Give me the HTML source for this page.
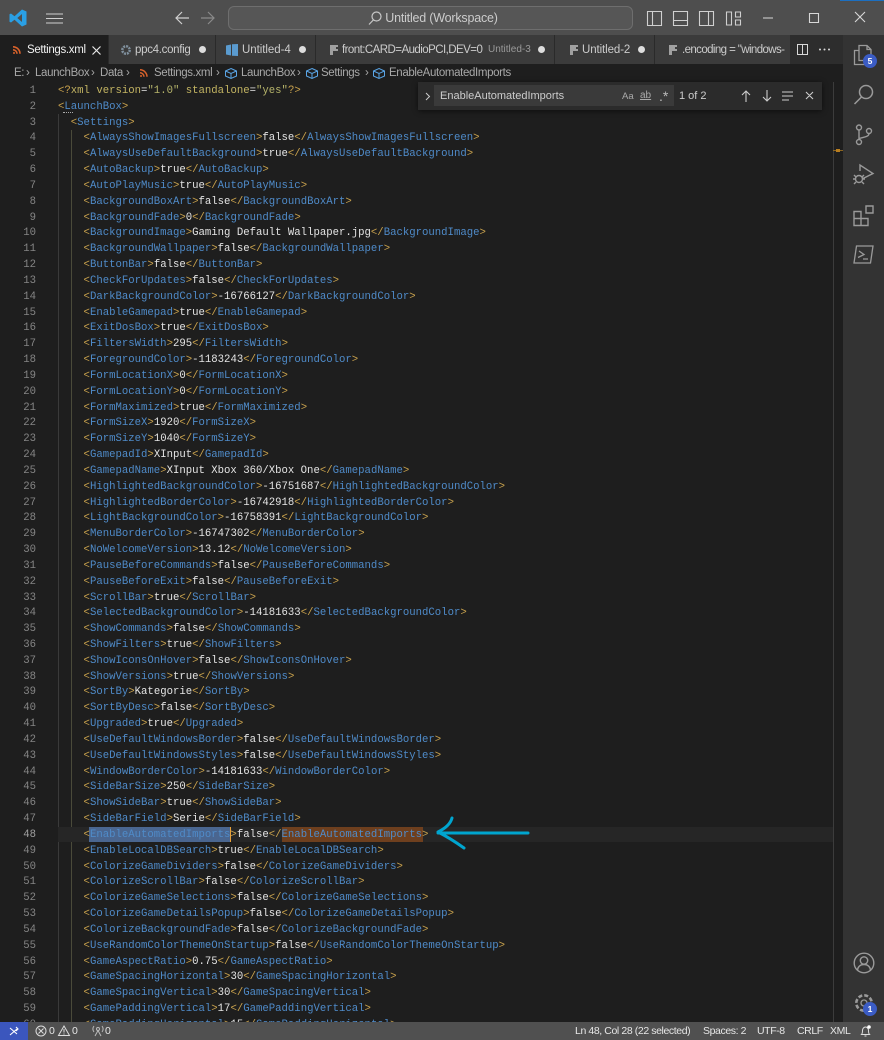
<!DOCTYPE html>
<html><head><meta charset="utf-8"><style>
html,body{margin:0;padding:0}
#r{position:relative;width:884px;height:1040px;overflow:hidden;background:#1e1e1e;font-family:"Liberation Sans",sans-serif;color:#ccc}
.a{position:absolute}
#title{left:0;top:0;width:884px;height:35px;background:#4e4e4e}
#cc{left:228px;top:6px;width:405px;height:24px;box-sizing:border-box;border:1px solid #6e6e6e;border-radius:6px;background:#565656;text-align:center;font-size:12.5px;letter-spacing:-.2px;line-height:23px;color:#ccc;padding-left:22px}
#tabs{left:0;top:35px;width:843px;height:29px;background:#3b3b3b}
.t{position:absolute;top:0;height:29px;line-height:30px;font-size:11.5px;white-space:nowrap;color:#ccc;border-right:1px solid #2a2a2a;box-sizing:border-box;overflow:hidden}
.t span{position:absolute;top:0}
.dot{position:absolute;top:11px;width:7px;height:7px;border-radius:50%;background:#ddd}
#bc{left:0;top:64px;width:843px;height:18px;background:#1e1e1e;font-size:11.5px;letter-spacing:-.36px;line-height:19px;color:#a8a8a8;white-space:nowrap}
#bc span{position:absolute;top:0}
#act{left:843px;top:35px;width:41px;height:987px;background:#333}
#code{left:58px;top:84px;width:775px;height:938px;overflow:hidden;font-family:"Liberation Mono",monospace;font-size:10.65px;line-height:15.83px;color:#e4e4e4;white-space:pre}
#nums{left:0;top:84px;width:36px;height:938px;overflow:hidden;font-family:"Liberation Mono",monospace;font-size:10.65px;line-height:15.83px;color:#858585;text-align:right;white-space:pre}
#code b{font-weight:normal;color:#c9a24d}
#code i{font-style:normal;color:#4f8bc9}
#code u{text-decoration:none;color:#c3b462}
#code s{text-decoration:none;color:#b5b36a}
.g{position:absolute;width:1px;background:#3a3a3a}
#find{left:418px;top:82px;width:404px;height:28px;background:#2b2b2b;box-shadow:0 1px 5px rgba(0,0,0,.55);font-size:11px;color:#ccc}
#fi{position:absolute;left:16px;top:3px;width:240px;height:21px;background:#3a3a3a;font-size:11px;line-height:23px;color:#ccc;text-indent:6px;white-space:nowrap}
#st{left:0;top:1022px;width:884px;height:18px;background:#505050;font-size:10.5px;letter-spacing:-.4px;line-height:19px;color:#e6e6e6;white-space:nowrap}
#st span{position:absolute;top:0}
.badge{position:absolute;width:14px;height:14px;border-radius:50%;background:#3b5cc4;color:#fff;font-size:8.5px;font-weight:bold;line-height:14px;text-align:center}
svg{position:absolute;overflow:visible}
</style></head><body><div id="r">

<div class="a" id="title"></div>
<svg style="left:9px;top:9px" width="18" height="18" viewBox="0 0 18 18"><path d="M13 0.5 L17.5 2.5 V15.5 L13 17.5 L5.5 10.8 L2 13.5 L0.5 12.7 V5.3 L2 4.5 L5.5 7.2 Z M13 5 L8.3 9 L13 13 Z" fill="#2a9fe4" fill-rule="evenodd"/></svg>
<svg style="left:46px;top:13px" width="17" height="11" fill="none" stroke="#d0d0d0"><path d="M0 1h17M0 5.500h17M0 10h17"/></svg>
<svg style="left:175px;top:11px" width="14" height="14" fill="none" stroke="#d0d0d0" stroke-width="1.200"><path d="M14 7H1M7 1L1 7l6 6"/></svg>
<svg style="left:201px;top:11px" width="14" height="14" fill="none" stroke="#8a8a8a" stroke-width="1.200"><path d="M0 7h13M7 1l6 6-6 6"/></svg>
<div class="a" id="cc">Untitled (Workspace)</div>
<svg style="left:368px;top:11px" width="14" height="15" fill="none" stroke="#c8c8c8" stroke-width="1.200"><circle cx="8.500" cy="5.500" r="4.500"/><path d="M5.300 9L1 13.500"/></svg>
<svg style="left:647px;top:11px" width="110" height="15" fill="none" stroke="#d0d0d0" stroke-width="1.100"><path d="M.5.500h14v14H.500zM5.500.500v14"/><path d="M26.500.500h14v14h-14zM26.500 9.500h14"/><path d="M52.500.500h14v14h-14zM61.500.500v14"/><path d="M79.500 1h5v13h-5zM88.500 1h5v5h-5zM88.500 9h5v5h-5z"/></svg>
<svg style="left:763px;top:11px" width="110" height="15" fill="none" stroke="#d8d8d8" stroke-width="1.100"><path d="M0 7h10M46.500 2.500h9v9h-9zM92 1l10 10M102 1L92 11"/></svg>
<div class="a" style="left:840px;top:0;width:44px;height:1px;background:#1c6fc0"></div>

<div class="a" id="tabs">
<div class="t" style="left:0;width:109px;background:#1e1e1e;color:#f0f0f0"><span style="left:27px;letter-spacing:-.33px">Settings.xml</span></div>
<div class="t" style="left:109px;width:107px"><span style="left:26px;letter-spacing:-.3px">ppc4.config</span><div class="dot" style="left:90px"></div></div>
<div class="t" style="left:216px;width:100px"><span style="left:26px;letter-spacing:-.05px">Untitled-4</span><div class="dot" style="left:83px"></div></div>
<div class="t" style="left:316px;width:239px"><span style="left:26px;letter-spacing:-.55px">front:CARD=AudioPCI,DEV=0</span><span style="left:172px;font-size:10px;color:#9a9a9a">Untitled-3</span><div class="dot" style="left:222px"></div></div>
<div class="t" style="left:555px;width:100px"><span style="left:27px;letter-spacing:-.1px">Untitled-2</span><div class="dot" style="left:83px"></div></div>
<div class="t" style="left:655px;width:135px;border:0"><span style="left:27px;letter-spacing:-.6px">.encoding = "windows-</span></div>
<div class="a" style="left:790px;top:0;width:53px;height:29px;background:#2d2d2d"></div>
</div>
<svg style="left:13px;top:46px" width="8" height="8" fill="none" stroke="#d9622b" stroke-width="1.600"><path d="M0 .800a7 7 0 0 1 7 7M0 3.800a4 4 0 0 1 4 4"/><circle cx="1" cy="7" r="1" fill="#d9622b" stroke="none"/></svg>
<svg style="left:92px;top:46px" width="9" height="9" fill="none" stroke="#e8e8e8" stroke-width="1.200"><path d="M.5.500l8 8M8.500.500l-8 8"/></svg>
<svg style="left:120px;top:44px" width="12" height="12"><circle cx="6" cy="6" r="3.700" fill="none" stroke="#7f8f9c" stroke-width="2.500" stroke-dasharray="2 .9"/></svg>
<svg style="left:226px;top:44px" width="12" height="12"><path d="M0 1.500l5-1v11l-5-1zM6 .300l6-.300v12l-6-.300z" fill="#5a9bd0"/></svg>
<svg style="left:330px;top:45px" width="10" height="10"><path d="M0 0h8v2H6v2h2v2H3v4H0z" fill="#a0a0a0"/></svg>
<svg style="left:570px;top:45px" width="10" height="10"><path d="M0 0h8v2H6v2h2v2H3v4H0z" fill="#a0a0a0"/></svg>
<svg style="left:669px;top:45px" width="10" height="10"><path d="M0 0h8v2H6v2h2v2H3v4H0z" fill="#a0a0a0"/></svg>
<svg style="left:797px;top:44px" width="11" height="11" fill="none" stroke="#d8d8d8"><path d="M.5.500h10v10H.500zM5.500.500v10"/></svg>
<svg style="left:819px;top:48px" width="11" height="3" fill="#d8d8d8"><circle cx="1" cy="1.500" r="1"/><circle cx="5.500" cy="1.500" r="1"/><circle cx="10" cy="1.500" r="1"/></svg>

<div class="a" id="bc">
<span style="left:14px">E:</span><span style="left:26px">›</span><span style="left:35px">LaunchBox</span><span style="left:91px">›</span><span style="left:100px">Data</span><span style="left:126px">›</span>
<span style="left:154px">Settings.xml</span><span style="left:216px">›</span><span style="left:241px">LaunchBox</span><span style="left:297px">›</span><span style="left:321px">Settings</span><span style="left:365px">›</span><span style="left:389px">EnableAutomatedImports</span>
</div>
<svg style="left:140px;top:69px" width="8" height="8" fill="none" stroke="#d9622b" stroke-width="1.500"><path d="M0 .800a7 7 0 0 1 7 7M0 3.800a4 4 0 0 1 4 4"/><circle cx="1" cy="7" r="1" fill="#d9622b" stroke="none"/></svg>
<svg style="left:225px;top:68px" width="12" height="11" fill="none" stroke="#5aa5e6"><path d="M6 .500l5.500 2.500v5L6 10.500.500 8V3zM.500 3L6 5.500 11.500 3M6 5.500v5"/></svg>
<svg style="left:306px;top:68px" width="12" height="11" fill="none" stroke="#5aa5e6"><path d="M6 .500l5.500 2.500v5L6 10.500.500 8V3zM.500 3L6 5.500 11.500 3M6 5.500v5"/></svg>
<svg style="left:373px;top:68px" width="12" height="11" fill="none" stroke="#5aa5e6"><path d="M6 .500l5.500 2.500v5L6 10.500.500 8V3zM.500 3L6 5.500 11.500 3M6 5.500v5"/></svg>

<div class="g" style="left:58px;top:114px;height:908px"></div>
<div class="g" style="left:71px;top:130px;height:892px;background:#4a4a3a"></div>
<div class="a" style="left:58px;top:826.500px;width:775px;height:15.800px;background:#262626"></div>
<div class="a" style="left:89px;top:827px;width:140.600px;height:15px;background:#4a6690"></div>
<div class="a" style="left:229.600px;top:827px;width:1.200px;height:15px;background:#e8a13a"></div>
<div class="a" style="left:282px;top:827px;width:140.600px;height:15px;background:#6e3f1e"></div>
<div class="a" style="left:63px;top:112px;width:10px;height:2px;border-top:1px dotted #aaa"></div>

<div class="a" id="nums">1
2
3
4
5
6
7
8
9
10
11
12
13
14
15
16
17
18
19
20
21
22
23
24
25
26
27
28
29
30
31
32
33
34
35
36
37
38
39
40
41
42
43
44
45
46
47
<span style="color:#a0a0a0">48</span>
49
50
51
52
53
54
55
56
57
58
59
60</div>

<div class="a" id="code"><b>&lt;?</b><u>xml version</u>=<s>"1.0"</s> <u>standalone</u>=<s>"yes"</s><b>?&gt;</b>
<b>&lt;</b><i>LaunchBox</i><b>&gt;</b>
  <b>&lt;</b><i>Settings</i><b>&gt;</b>
    <b>&lt;</b><i>AlwaysShowImagesFullscreen</i><b>&gt;</b>false<b>&lt;/</b><i>AlwaysShowImagesFullscreen</i><b>&gt;</b>
    <b>&lt;</b><i>AlwaysUseDefaultBackground</i><b>&gt;</b>true<b>&lt;/</b><i>AlwaysUseDefaultBackground</i><b>&gt;</b>
    <b>&lt;</b><i>AutoBackup</i><b>&gt;</b>true<b>&lt;/</b><i>AutoBackup</i><b>&gt;</b>
    <b>&lt;</b><i>AutoPlayMusic</i><b>&gt;</b>true<b>&lt;/</b><i>AutoPlayMusic</i><b>&gt;</b>
    <b>&lt;</b><i>BackgroundBoxArt</i><b>&gt;</b>false<b>&lt;/</b><i>BackgroundBoxArt</i><b>&gt;</b>
    <b>&lt;</b><i>BackgroundFade</i><b>&gt;</b>0<b>&lt;/</b><i>BackgroundFade</i><b>&gt;</b>
    <b>&lt;</b><i>BackgroundImage</i><b>&gt;</b>Gaming Default Wallpaper.jpg<b>&lt;/</b><i>BackgroundImage</i><b>&gt;</b>
    <b>&lt;</b><i>BackgroundWallpaper</i><b>&gt;</b>false<b>&lt;/</b><i>BackgroundWallpaper</i><b>&gt;</b>
    <b>&lt;</b><i>ButtonBar</i><b>&gt;</b>false<b>&lt;/</b><i>ButtonBar</i><b>&gt;</b>
    <b>&lt;</b><i>CheckForUpdates</i><b>&gt;</b>false<b>&lt;/</b><i>CheckForUpdates</i><b>&gt;</b>
    <b>&lt;</b><i>DarkBackgroundColor</i><b>&gt;</b>-16766127<b>&lt;/</b><i>DarkBackgroundColor</i><b>&gt;</b>
    <b>&lt;</b><i>EnableGamepad</i><b>&gt;</b>true<b>&lt;/</b><i>EnableGamepad</i><b>&gt;</b>
    <b>&lt;</b><i>ExitDosBox</i><b>&gt;</b>true<b>&lt;/</b><i>ExitDosBox</i><b>&gt;</b>
    <b>&lt;</b><i>FiltersWidth</i><b>&gt;</b>295<b>&lt;/</b><i>FiltersWidth</i><b>&gt;</b>
    <b>&lt;</b><i>ForegroundColor</i><b>&gt;</b>-1183243<b>&lt;/</b><i>ForegroundColor</i><b>&gt;</b>
    <b>&lt;</b><i>FormLocationX</i><b>&gt;</b>0<b>&lt;/</b><i>FormLocationX</i><b>&gt;</b>
    <b>&lt;</b><i>FormLocationY</i><b>&gt;</b>0<b>&lt;/</b><i>FormLocationY</i><b>&gt;</b>
    <b>&lt;</b><i>FormMaximized</i><b>&gt;</b>true<b>&lt;/</b><i>FormMaximized</i><b>&gt;</b>
    <b>&lt;</b><i>FormSizeX</i><b>&gt;</b>1920<b>&lt;/</b><i>FormSizeX</i><b>&gt;</b>
    <b>&lt;</b><i>FormSizeY</i><b>&gt;</b>1040<b>&lt;/</b><i>FormSizeY</i><b>&gt;</b>
    <b>&lt;</b><i>GamepadId</i><b>&gt;</b>XInput<b>&lt;/</b><i>GamepadId</i><b>&gt;</b>
    <b>&lt;</b><i>GamepadName</i><b>&gt;</b>XInput Xbox 360/Xbox One<b>&lt;/</b><i>GamepadName</i><b>&gt;</b>
    <b>&lt;</b><i>HighlightedBackgroundColor</i><b>&gt;</b>-16751687<b>&lt;/</b><i>HighlightedBackgroundColor</i><b>&gt;</b>
    <b>&lt;</b><i>HighlightedBorderColor</i><b>&gt;</b>-16742918<b>&lt;/</b><i>HighlightedBorderColor</i><b>&gt;</b>
    <b>&lt;</b><i>LightBackgroundColor</i><b>&gt;</b>-16758391<b>&lt;/</b><i>LightBackgroundColor</i><b>&gt;</b>
    <b>&lt;</b><i>MenuBorderColor</i><b>&gt;</b>-16747302<b>&lt;/</b><i>MenuBorderColor</i><b>&gt;</b>
    <b>&lt;</b><i>NoWelcomeVersion</i><b>&gt;</b>13.12<b>&lt;/</b><i>NoWelcomeVersion</i><b>&gt;</b>
    <b>&lt;</b><i>PauseBeforeCommands</i><b>&gt;</b>false<b>&lt;/</b><i>PauseBeforeCommands</i><b>&gt;</b>
    <b>&lt;</b><i>PauseBeforeExit</i><b>&gt;</b>false<b>&lt;/</b><i>PauseBeforeExit</i><b>&gt;</b>
    <b>&lt;</b><i>ScrollBar</i><b>&gt;</b>true<b>&lt;/</b><i>ScrollBar</i><b>&gt;</b>
    <b>&lt;</b><i>SelectedBackgroundColor</i><b>&gt;</b>-14181633<b>&lt;/</b><i>SelectedBackgroundColor</i><b>&gt;</b>
    <b>&lt;</b><i>ShowCommands</i><b>&gt;</b>false<b>&lt;/</b><i>ShowCommands</i><b>&gt;</b>
    <b>&lt;</b><i>ShowFilters</i><b>&gt;</b>true<b>&lt;/</b><i>ShowFilters</i><b>&gt;</b>
    <b>&lt;</b><i>ShowIconsOnHover</i><b>&gt;</b>false<b>&lt;/</b><i>ShowIconsOnHover</i><b>&gt;</b>
    <b>&lt;</b><i>ShowVersions</i><b>&gt;</b>true<b>&lt;/</b><i>ShowVersions</i><b>&gt;</b>
    <b>&lt;</b><i>SortBy</i><b>&gt;</b>Kategorie<b>&lt;/</b><i>SortBy</i><b>&gt;</b>
    <b>&lt;</b><i>SortByDesc</i><b>&gt;</b>false<b>&lt;/</b><i>SortByDesc</i><b>&gt;</b>
    <b>&lt;</b><i>Upgraded</i><b>&gt;</b>true<b>&lt;/</b><i>Upgraded</i><b>&gt;</b>
    <b>&lt;</b><i>UseDefaultWindowsBorder</i><b>&gt;</b>false<b>&lt;/</b><i>UseDefaultWindowsBorder</i><b>&gt;</b>
    <b>&lt;</b><i>UseDefaultWindowsStyles</i><b>&gt;</b>false<b>&lt;/</b><i>UseDefaultWindowsStyles</i><b>&gt;</b>
    <b>&lt;</b><i>WindowBorderColor</i><b>&gt;</b>-14181633<b>&lt;/</b><i>WindowBorderColor</i><b>&gt;</b>
    <b>&lt;</b><i>SideBarSize</i><b>&gt;</b>250<b>&lt;/</b><i>SideBarSize</i><b>&gt;</b>
    <b>&lt;</b><i>ShowSideBar</i><b>&gt;</b>true<b>&lt;/</b><i>ShowSideBar</i><b>&gt;</b>
    <b>&lt;</b><i>SideBarField</i><b>&gt;</b>Serie<b>&lt;/</b><i>SideBarField</i><b>&gt;</b>
    <b>&lt;</b><i>EnableAutomatedImports</i><b>&gt;</b>false<b>&lt;/</b><i>EnableAutomatedImports</i><b>&gt;</b>
    <b>&lt;</b><i>EnableLocalDBSearch</i><b>&gt;</b>true<b>&lt;/</b><i>EnableLocalDBSearch</i><b>&gt;</b>
    <b>&lt;</b><i>ColorizeGameDividers</i><b>&gt;</b>false<b>&lt;/</b><i>ColorizeGameDividers</i><b>&gt;</b>
    <b>&lt;</b><i>ColorizeScrollBar</i><b>&gt;</b>false<b>&lt;/</b><i>ColorizeScrollBar</i><b>&gt;</b>
    <b>&lt;</b><i>ColorizeGameSelections</i><b>&gt;</b>false<b>&lt;/</b><i>ColorizeGameSelections</i><b>&gt;</b>
    <b>&lt;</b><i>ColorizeGameDetailsPopup</i><b>&gt;</b>false<b>&lt;/</b><i>ColorizeGameDetailsPopup</i><b>&gt;</b>
    <b>&lt;</b><i>ColorizeBackgroundFade</i><b>&gt;</b>false<b>&lt;/</b><i>ColorizeBackgroundFade</i><b>&gt;</b>
    <b>&lt;</b><i>UseRandomColorThemeOnStartup</i><b>&gt;</b>false<b>&lt;/</b><i>UseRandomColorThemeOnStartup</i><b>&gt;</b>
    <b>&lt;</b><i>GameAspectRatio</i><b>&gt;</b>0.75<b>&lt;/</b><i>GameAspectRatio</i><b>&gt;</b>
    <b>&lt;</b><i>GameSpacingHorizontal</i><b>&gt;</b>30<b>&lt;/</b><i>GameSpacingHorizontal</i><b>&gt;</b>
    <b>&lt;</b><i>GameSpacingVertical</i><b>&gt;</b>30<b>&lt;/</b><i>GameSpacingVertical</i><b>&gt;</b>
    <b>&lt;</b><i>GamePaddingVertical</i><b>&gt;</b>17<b>&lt;/</b><i>GamePaddingVertical</i><b>&gt;</b>
    <b>&lt;</b><i>GamePaddingHorizontal</i><b>&gt;</b>15<b>&lt;/</b><i>GamePaddingHorizontal</i><b>&gt;</b></div>

<svg style="left:436px;top:817px" width="94" height="33" fill="none" stroke="#00a5cf" stroke-width="3" stroke-linecap="round" stroke-linejoin="round"><path d="M92 16H2M16 1Q14 9 2 15Q14 21 28 31"/></svg>

<div class="a" style="left:833px;top:82px;width:1px;height:940px;background:#3c3c3c"></div>
<div class="a" style="left:833px;top:150px;width:10px;height:1px;background:#8a6420"></div>
<div class="a" style="left:836px;top:149px;width:4px;height:3px;background:#b87d1f"></div>

<div class="a" id="find">
<svg style="left:7px;top:10px" width="6" height="9" fill="none" stroke="#ccc"><path d="M1 1l3.500 3.500L1 8"/></svg>
<div id="fi">EnableAutomatedImports</div>
<span class="a" style="left:204px;top:9px;font-size:9.500px;color:#aaa">Aa</span>
<span class="a" style="left:222px;top:8px;font-size:10px;color:#aaa;text-decoration:underline">ab</span>
<span class="a" style="left:241px;top:6px;font-size:14px;color:#bbb">.*</span>
<span class="a" style="left:261px;top:8px;font-size:11px">1 of 2</span>
<svg style="left:323px;top:8px" width="90" height="13" fill="none" stroke="#ccc" stroke-width="1.100"><path d="M5 12V1M1 5l4-4 4 4M26 0v11M22 7l4 4 4-4M41 2h11M41 6h11M41 10h7M65 2l7 7M72 2l-7 7"/></svg>
</div>

<div class="a" id="act"></div>
<svg style="left:853px;top:44px" width="22" height="24" fill="none" stroke="#9a9a9a" stroke-width="1.300"><path d="M6 1.500h8l4 4v11H6zM14 1.500v4h4M6 6.500H1.500v14H12v-4"/></svg>
<div class="badge" style="left:863px;top:54px">5</div>
<svg style="left:853px;top:84px" width="22" height="22" fill="none" stroke="#9a9a9a" stroke-width="1.500"><circle cx="13" cy="8" r="6.500"/><path d="M8.500 13L1.500 20"/></svg>
<svg style="left:855px;top:124px" width="18" height="22" fill="none" stroke="#9a9a9a" stroke-width="1.400"><circle cx="4" cy="3.500" r="2.500"/><circle cx="4" cy="18" r="2.500"/><circle cx="14" cy="7" r="2.500"/><path d="M4 6v9.500M14 9.500c0 3-4 3.500-10 5"/></svg>
<svg style="left:853px;top:164px" width="22" height="22" fill="none" stroke="#9a9a9a" stroke-width="1.400"><path d="M7 7V1l13 8.500L9 15"/><circle cx="6" cy="15" r="3.500"/><path d="M1 11l2 2M11 11l-2 2M0 15h2M10 15h2M1 20l2-2M11 20l-2-2"/></svg>
<svg style="left:853px;top:205px" width="22" height="22" fill="none" stroke="#9a9a9a" stroke-width="1.400"><path d="M1 6.500h7v7h7v7H1zM1 13.500h7v7M13 1h7v7h-7z"/></svg>
<svg style="left:853px;top:245px" width="22" height="20" fill="none" stroke="#9a9a9a" stroke-width="1.300"><path d="M3.500 1H20l-2.500 17H1zM6 6l5 3.500-6 3M10 14h5"/></svg>
<svg style="left:853px;top:952px" width="22" height="22" fill="none" stroke="#9a9a9a" stroke-width="1.400"><circle cx="11" cy="11" r="9.800"/><circle cx="11" cy="8.500" r="3.700"/><path d="M4.500 18c.5-3.500 3-5.500 6.500-5.500s6 2 6.500 5.500"/></svg>
<svg style="left:853px;top:992px" width="22" height="22" fill="none" stroke="#9a9a9a" stroke-width="2.600"><circle cx="11" cy="11" r="7.700" stroke-dasharray="4 2.050"/><circle cx="11" cy="11" r="3" stroke-width="1.300"/></svg>
<div class="badge" style="left:863px;top:1002px">1</div>

<div class="a" id="st">
<div class="a" style="left:0;top:0;width:28px;height:18px;background:#3b56bd"></div>
<svg style="left:9px;top:3px" width="11" height="12" fill="none" stroke="#fff" stroke-width="1.100"><path d="M1 10l7-6M7 2l2 2-2 2M1 3l7 6"/></svg>
<svg style="left:35px;top:3px" width="12" height="12" fill="none" stroke="#ddd"><circle cx="6" cy="6" r="5"/><path d="M3.500 3.500l5 5M8.500 3.500l-5 5"/></svg>
<span style="left:49px">0</span>
<svg style="left:58px;top:3px" width="12" height="11" fill="none" stroke="#ddd"><path d="M6 1l5.500 9.500H.500zM6 4v3.500M6 8.500v1"/></svg>
<span style="left:72px">0</span>
<svg style="left:92px;top:3px" width="12" height="12" fill="none" stroke="#bbb"><circle cx="6" cy="4" r="1.500"/><path d="M6 5.500L3 11M6 5.500L9 11M2 1C.500 3 .500 5 2 7M10 1c1.500 2 1.500 4 0 6"/></svg>
<span style="left:105px">0</span>
<span style="left:575px">Ln 48, Col 28 (22 selected)</span>
<span style="left:703px">Spaces: 2</span>
<span style="left:757px">UTF-8</span>
<span style="left:797px">CRLF</span>
<span style="left:830px">XML</span>
<svg style="left:860px;top:3px" width="11" height="12" fill="none" stroke="#ddd"><path d="M1.500 9.500c1-1 1-2 1-4 0-2 1.500-3.500 3-3.500s3 1.500 3 3.500c0 2 0 3 1 4zM4.500 11h2"/><circle cx="9" cy="2" r="1.800" fill="#fff" stroke="none"/></svg>
</div>
</div></body></html>
